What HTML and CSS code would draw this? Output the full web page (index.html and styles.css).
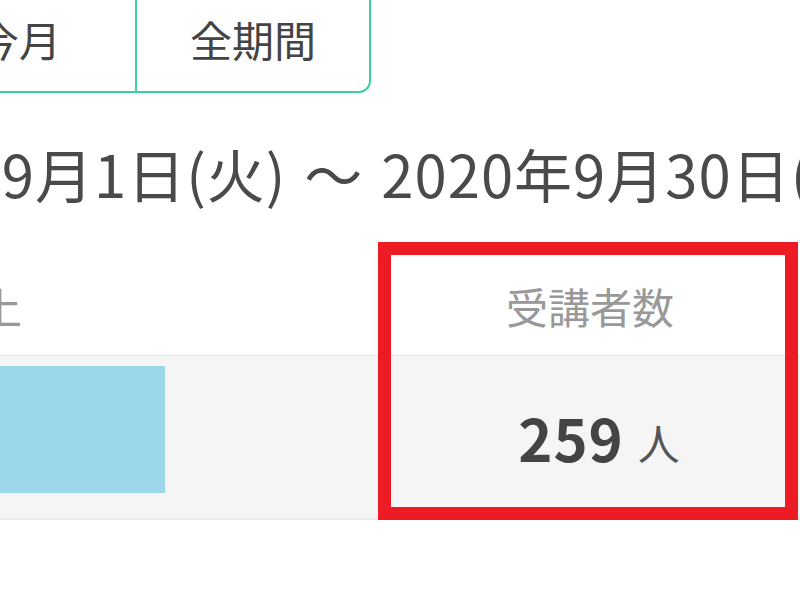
FILE: index.html
```html
<!DOCTYPE html>
<html lang="ja">
<head>
    <meta charset="UTF-8">
    <title>受講者数</title>
    <link rel="stylesheet" href="styles.css">
</head>
<body>
    <div class="page">
        <!-- 期間タブ -->
        <div class="period-tabs">
            <div class="period-tab">今月</div>
            <div class="period-tab">全期間</div>
        </div>

        <div class="period-range">2020年9月1日(火) ～ 2020年9月30日(水)</div>

        <div class="summary-table">
            <div class="summary-col col-sales">
                <div class="summary-head">売上</div>
                <div class="summary-body">
                    <div class="bar" style="width: 365px;"></div>
                </div>
            </div>
            <div class="summary-col col-students">
                <div class="summary-head">受講者数</div>
                <div class="summary-body">
                    <span class="count">259</span><span class="unit">人</span>
                </div>
            </div>

            <!-- 注目枠 -->
            <div class="highlight"></div>
        </div>
    </div>
</body>
</html>
```

FILE: styles.css
```css
body {
    margin: 0;
    background-color: #fff;
    font-family: "Noto Sans CJK JP", "Noto Sans", sans-serif;
    color: #444;
}

.page {
    width: 800px;
    height: 600px;
    overflow: hidden;
}

.period-tabs {
    display: flex;
    width: 470px;
    height: 109px;
    margin-top: -16px;
    margin-left: -99px;
    border: 2px solid #3ccfa4;
    border-radius: 12px;
    box-sizing: border-box;
}

.period-tab {
    flex: 1;
    display: flex;
    align-items: center;
    justify-content: center;
    font-size: 42px;
    line-height: 1;
    color: #444;
}

.period-tab + .period-tab {
    border-left: 2px solid #3ccfa4;
}

.period-range {
    margin-top: 45px;
    margin-left: -190px;
    font-size: 58px;
    letter-spacing: 1px;
    word-spacing: 4px;
    line-height: 70px;
    white-space: nowrap;
    color: #4a4a4a;
}

.summary-table {
    position: relative;
    display: flex;
    margin-top: 47px;
    margin-left: -200px;
}

.summary-col {
    display: flex;
    flex-direction: column;
}

.col-sales {
    width: 580px;
}

.col-students {
    width: 420px;
}

.summary-head {
    height: 100px;
    display: flex;
    align-items: center;
    font-size: 42px;
    color: #999;
    border-bottom: 1px solid #e6e6e6;
}

.col-sales .summary-head {
    padding-left: 138px;
}

.col-students .summary-head {
    justify-content: center;
}

.summary-body {
    height: 164px;
    background-color: #f5f5f5;
    border-bottom: 2px solid #ebebeb;
    box-sizing: border-box;
}

.col-sales .summary-body {
    padding-top: 10px;
}

.bar {
    height: 127px;
    background-color: #9cd8e9;
}

.col-students .summary-body {
    display: flex;
    align-items: center;
    justify-content: center;
    gap: 14px;
    padding-left: 18px;
}

.count {
    font-size: 58px;
    font-weight: bold;
    letter-spacing: 1px;
    color: #444;
}

.unit {
    font-size: 42px;
    color: #555;
    padding-top: 8px;
}

.highlight {
    position: absolute;
    top: -13px;
    left: 578px;
    width: 420px;
    height: 278px;
    border: 13px solid #ed1c24;
    box-sizing: border-box;
}
```
